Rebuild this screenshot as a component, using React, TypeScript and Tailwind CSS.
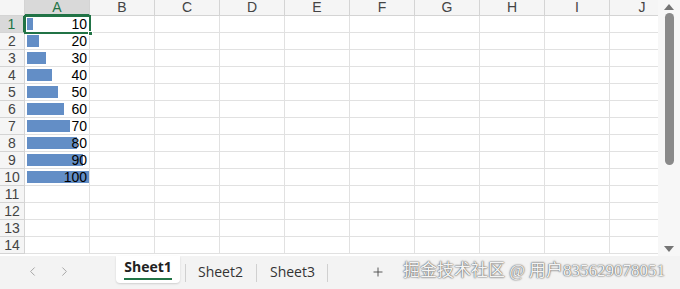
import { ChevronLeft, ChevronRight, Plus } from 'lucide-react'

const COLS = ['A', 'B', 'C', 'D', 'E', 'F', 'G', 'H', 'I', 'J']
const ROWS = Array.from({ length: 14 }, (_, i) => i + 1)
const VALUES: Record<number, number> = { 1: 10, 2: 20, 3: 30, 4: 40, 5: 50, 6: 60, 7: 70, 8: 80, 9: 90, 10: 100 }

function Cell({ row, col }: { row: number; col: string }) {
  const v = col === 'A' ? VALUES[row] : undefined
  return (
    <div className="relative h-full w-[65px] shrink-0 border-b border-r border-[#e1e1e1]">
      {v !== undefined && (
        <>
          <div className="absolute left-[2px] top-[2px] h-[12px] bg-[#638ec6]" style={{ width: v * 0.62 }} />
          <span className="absolute right-[2px] top-0 text-[14px] leading-[17px] text-black">{v}</span>
        </>
      )}
    </div>
  )
}

export default function App() {
  return (
    <div className="flex h-[289px] w-[680px] flex-col overflow-hidden bg-white font-['Liberation_Sans',Arial,sans-serif]">
      <div className="flex h-[256px] shrink-0">
        {/* grid */}
        <div className="relative w-[658px] shrink-0 overflow-hidden">
          <div className="flex h-[16px] bg-[#f5f5f5]">
            <div className="relative w-[25px] shrink-0 border-b border-r border-[#d4d4d4]">
              <div className="absolute bottom-[2px] right-[2px] h-0 w-0 border-l-[6px] border-t-[6px] border-l-transparent border-t-transparent border-b-[#d0d0d0] border-r-[#d0d0d0]" />
            </div>
            {COLS.map((c) => (
              <div
                key={c}
                className={`w-[65px] shrink-0 border-r text-center text-[14px] leading-[15px] ${
                  c === 'A'
                    ? 'border-b-2 border-b-[#217346] border-r-[#d4d4d4] bg-[#d9d9d9] text-[#217346]'
                    : 'border-b border-[#d4d4d4] text-[#444]'
                }`}
              >
                {c}
              </div>
            ))}
          </div>
          {ROWS.map((r) => (
            <div key={r} className="flex h-[17px]">
              <div
                className={`w-[25px] shrink-0 border-b text-center text-[14px] leading-[17px] ${
                  r === 1
                    ? 'border-r-2 border-b-[#d4d4d4] border-r-[#217346] bg-[#d9d9d9] text-[#217346]'
                    : 'border-r border-[#d4d4d4] bg-[#f5f5f5] text-[#444]'
                }`}
              >
                {r}
              </div>
              {COLS.map((c) => (
                <Cell key={c} row={r} col={c} />
              ))}
            </div>
          ))}
          {/* selection */}
          <div className="absolute left-[24px] top-[15px] h-[19px] w-[67px] border-2 border-[#217346]" />
          <div className="absolute left-[88px] top-[31px] h-[5px] w-[5px] border border-white bg-[#217346]" />
        </div>
        {/* scrollbar */}
        <div className="flex w-[22px] flex-col items-center bg-[#f7f7f7] pt-[4px]">
          <div className="h-0 w-0 border-x-[5px] border-b-[6px] border-x-transparent border-b-[#757575]" />
          <div className="mt-[3px] h-[152px] w-[9px] rounded-full bg-[#8a8a8a]" />
          <div className="mt-auto mb-[4px] h-0 w-0 border-x-[5px] border-t-[6px] border-x-transparent border-t-[#757575]" />
        </div>
      </div>

      {/* sheet tabs */}
      <div className="relative flex h-[33px] items-start bg-[#f3f3f3] font-['Segoe_UI','Open_Sans',sans-serif]">
        <div className="flex h-[30px] items-center">
          <ChevronLeft className="ml-[25px] h-[15px] w-[15px] text-[#a0a0a0]" strokeWidth={1.5} />
          <ChevronRight className="ml-[17px] h-[15px] w-[15px] text-[#a0a0a0]" strokeWidth={1.5} />
        </div>
        <div className="ml-[44px] flex h-[27px] w-[64px] flex-col items-center rounded-b-[4px] bg-white pt-[2px] shadow-[0_1px_2px_rgba(0,0,0,0.15)]">
          <span className="text-[14px] font-bold leading-[18px] text-[#222]">Sheet1</span>
          <div className="mt-[2px] h-[2px] w-[48px] bg-[#217346]" />
        </div>
        <div className="mt-[8px] h-[18px] w-px bg-[#d0d0d0] ml-[5px]" />
        <span className="ml-[12px] mt-[4px] text-[14px] leading-[24px] text-[#333]">Sheet2</span>
        <div className="mt-[8px] h-[18px] w-px bg-[#d0d0d0] ml-[13px]" />
        <span className="ml-[13px] mt-[4px] text-[14px] leading-[24px] text-[#333]">Sheet3</span>
        <div className="mt-[8px] h-[18px] w-px bg-[#d0d0d0] ml-[12px]" />
        <Plus className="ml-[43px] mt-[9px] h-[14px] w-[14px] text-[#444]" strokeWidth={1.5} />
        <span className="ml-[18px] mt-[4px] whitespace-nowrap text-[17px] leading-[22px] text-[#f4f4f4] [text-shadow:0_0_2px_#555,0_0_1px_#555] font-['Liberation_Serif','Noto_Sans_CJK_SC',serif]">
          掘金技术社区 @ 用户835629078051
        </span>
      </div>
    </div>
  )
}
